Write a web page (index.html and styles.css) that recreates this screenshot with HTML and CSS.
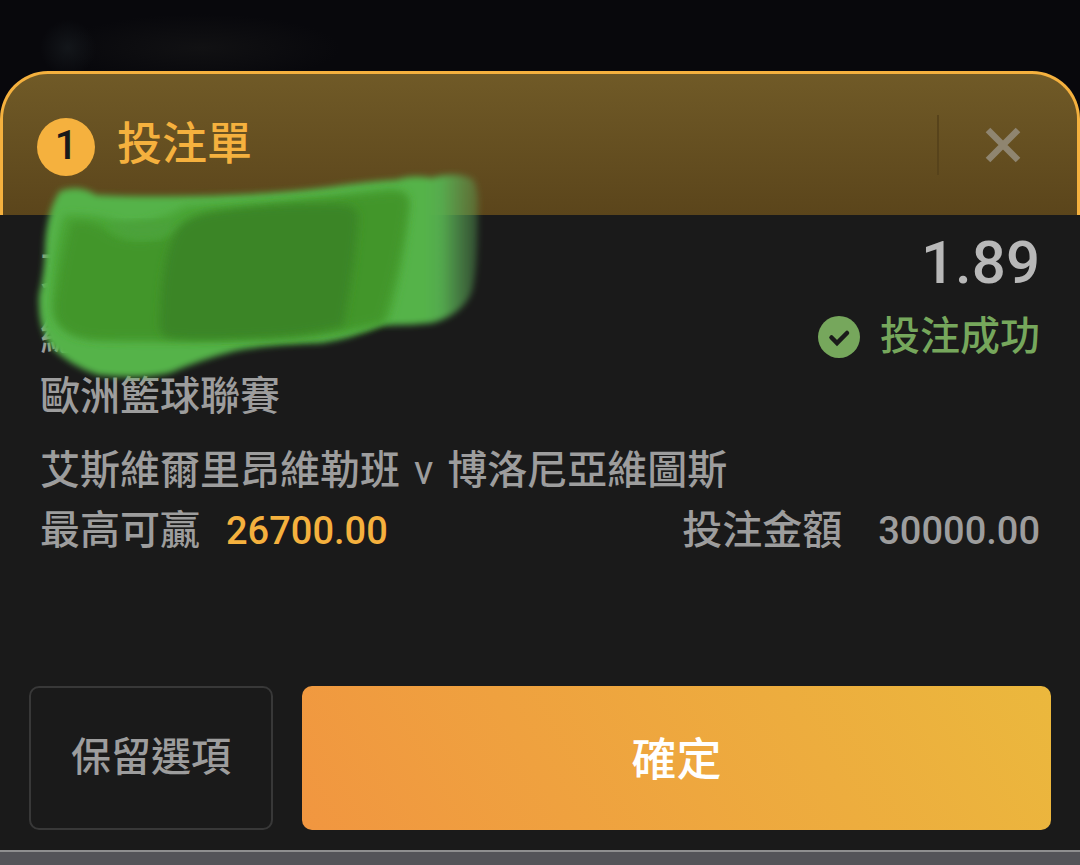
FILE: index.html
```html
<!DOCTYPE html>
<html lang="zh-Hant">
<head>
    <meta charset="UTF-8">
    <meta name="viewport" content="width=device-width, initial-scale=1.0">
    <title>投注單</title>
    <link rel="stylesheet" href="styles.css">
</head>
<body>
    <div class="backdrop"></div>

    <main class="sheet">
        <header class="sheet-header">
            <span class="badge">1</span>
            <h1 class="title">投注單</h1>
            <button type="button" class="close" aria-label="關閉">
                <svg width="36" height="36" viewBox="0 0 36 36">
                    <path d="M3 3L33 33M33 3L3 33" stroke="#8f8570" stroke-width="6.500"/>
                </svg>
            </button>
        </header>

        <section class="bet">
            <div class="row first">
                <span class="pick">艾</span>
                <span class="odds">1.89</span>
            </div>
            <div class="row">
                <span>總</span>
                <span class="status">
                    <svg width="42" height="42" viewBox="0 0 42 42">
                        <circle cx="21" cy="21" r="21" fill="#76a75c"/>
                        <path d="M13.500 21.500L19 27L29 17" fill="none" stroke="#1a1a1a" stroke-width="4.500" stroke-linecap="round"/>
                    </svg>
                    投注成功
                </span>
            </div>
            <p class="row league">歐洲籃球聯賽</p>
            <p class="row match">艾斯維爾里昂維勒班<span class="versus">v</span>博洛尼亞維圖斯</p>
            <div class="row">
                <span class="pair">最高可贏 <b class="amount win">26700.00</b></span>
                <span class="pair stake">投注金額 <b class="amount">30000.00</b></span>
            </div>
        </section>

        <div class="actions">
            <button type="button" class="keep">保留選項</button>
            <button type="button" class="confirm">確定</button>
        </div>

        <!-- marker strokes hiding the selection -->
        <svg class="marker" width="500" height="240" viewBox="0 160 500 240" aria-hidden="true">
            <defs>
                <linearGradient id="fade" gradientUnits="userSpaceOnUse" x1="425" y1="0" x2="480" y2="0">
                    <stop offset="0" stop-color="#54b34a"/>
                    <stop offset="0.300" stop-color="#56b050" stop-opacity="0.950"/>
                    <stop offset="1" stop-color="#5faa5c" stop-opacity="0.300"/>
                </linearGradient>
                <filter id="soft" x="-10%" y="-10%" width="120%" height="120%"><feGaussianBlur stdDeviation="3"/></filter>
                <filter id="softer" x="-10%" y="-10%" width="120%" height="120%"><feGaussianBlur stdDeviation="4"/></filter>
            </defs>
            <path filter="url(#soft)" fill="url(#fade)" d="M60 191Q80 184 96 195Q130 197 190 196Q270 195 330 187Q370 181 396 180Q412 174 432 178Q456 171 473 179Q480 190 478 215Q478 270 472 292Q462 315 432 323Q405 326 382 325Q350 339 322 343Q270 344 235 351Q200 360 170 373Q140 380 98 375Q70 366 50 346Q37 325 39 295Q45 270 45 245Q47 210 60 191Z"/>
            <path filter="url(#softer)" fill="#4aa436" d="M64 215Q105 214 125 225Q160 222 185 206Q290 202 375 191Q410 185 409 203Q404 270 388 321Q350 333 300 338Q180 342 95 339Q50 335 52 300Q54 245 64 215Z"/>
            <path filter="url(#softer)" fill="#42962c" d="M72 222Q95 220 110 234Q140 248 175 232Q210 209 385 193Q408 190 408 204Q401 260 382 322Q340 332 300 336Q180 341 95 339Q53 335 55 305Q62 255 72 222Z"/>
            <path filter="url(#softer)" fill="#4ca23a" d="M108 223Q145 218 180 222Q172 240 142 240Q120 238 108 223Z"/>
            <path filter="url(#softer)" fill="#3a8526" d="M177 230Q188 215 215 211Q280 202 345 205Q360 208 358 222Q354 270 343 326Q300 337 250 338Q190 341 165 337Q158 330 160 315Q162 255 177 230Z"/>
        </svg>
    </main>

    <div class="toolbar"></div>
</body>
</html>
```

FILE: styles.css
```css
:root {
    --orange: #f5b13e;
    --panel: #1a1a1a;
    --text: #9d9d9d;
    --green: #76a75c;
}

* {
    box-sizing: border-box;
}

body {
    margin: 0;
    min-height: 100vh;
    display: flex;
    flex-direction: column;
    background-color: #08080c;
    color: var(--text);
    font-family: Roboto, "Noto Sans CJK TC", sans-serif;
    font-size: 40px;
    font-weight: 500;
    line-height: 60px;
}

.backdrop {
    height: 71px;
    background: radial-gradient(circle at 68px 48px, #13161a 0, transparent 28px),
        radial-gradient(ellipse 140px 34px at 200px 48px, #111113 0, transparent 100%);
}

.sheet {
    position: relative;
    flex: 1;
    display: flex;
    flex-direction: column;
    background-color: var(--panel);
    border-radius: 48px 48px 0 0;
}

.sheet-header {
    display: flex;
    align-items: center;
    height: 144px;
    padding: 0 36px 0 34px;
    border: 3px solid var(--orange);
    border-bottom: none;
    border-radius: 48px 48px 0 0;
    background: linear-gradient(#705a27, #5b451b);
}

.badge {
    width: 58px;
    height: 58px;
    margin-top: 4px;
    border-radius: 50%;
    background-color: var(--orange);
    color: var(--panel);
    line-height: 56px;
    text-align: center;
}

.title {
    margin: 0 auto 0 22px;
    color: var(--orange);
    font-size: 45px;
    font-weight: 500;
}

.close {
    display: flex;
    align-items: center;
    height: 60px;
    padding: 0 20px 0 46px;
    border: none;
    border-left: 2px solid #57431b;
    background: none;
    cursor: pointer;
}

.bet {
    padding: 18px 40px 0;
}

.row {
    display: flex;
    justify-content: space-between;
    align-items: center;
    height: 60px;
    margin: 0;
}

.first,
.league {
    margin-bottom: 14px;
}

.pick {
    padding-top: 16px;
}

.match {
    justify-content: flex-start;
}

.versus {
    margin: 0 14px;
    font-weight: 400;
}

.odds {
    color: #b8b8b8;
    font-size: 60px;
}

.status {
    display: flex;
    align-items: center;
    gap: 20px;
    color: var(--green);
}

.pair {
    display: flex;
    align-items: center;
    gap: 26px;
}

.stake {
    gap: 36px;
}

.amount {
    font-size: 38px;
    font-weight: 500;
}

.win {
    color: var(--orange);
}

.actions {
    display: flex;
    gap: 29px;
    margin-top: auto;
    padding: 20px 29px;
}

.actions button {
    height: 144px;
    border-radius: 10px;
    font-family: inherit;
    font-weight: 500;
    cursor: pointer;
}

.keep {
    padding: 0 40px 8px;
    border: 2px solid #383838;
    background: none;
    color: var(--text);
    font-size: 40px;
}

.confirm {
    flex: 1;
    padding: 0 0 4px;
    border: none;
    background: linear-gradient(60deg, #f19640, #ebb83d);
    color: #fff;
    font-size: 45px;
}

.marker {
    position: absolute;
    top: 89px;
    left: 0;
    pointer-events: none;
}

.toolbar {
    height: 15px;
    border-top: 2px solid #8f8f8f;
    background-color: #545458;
}
```
